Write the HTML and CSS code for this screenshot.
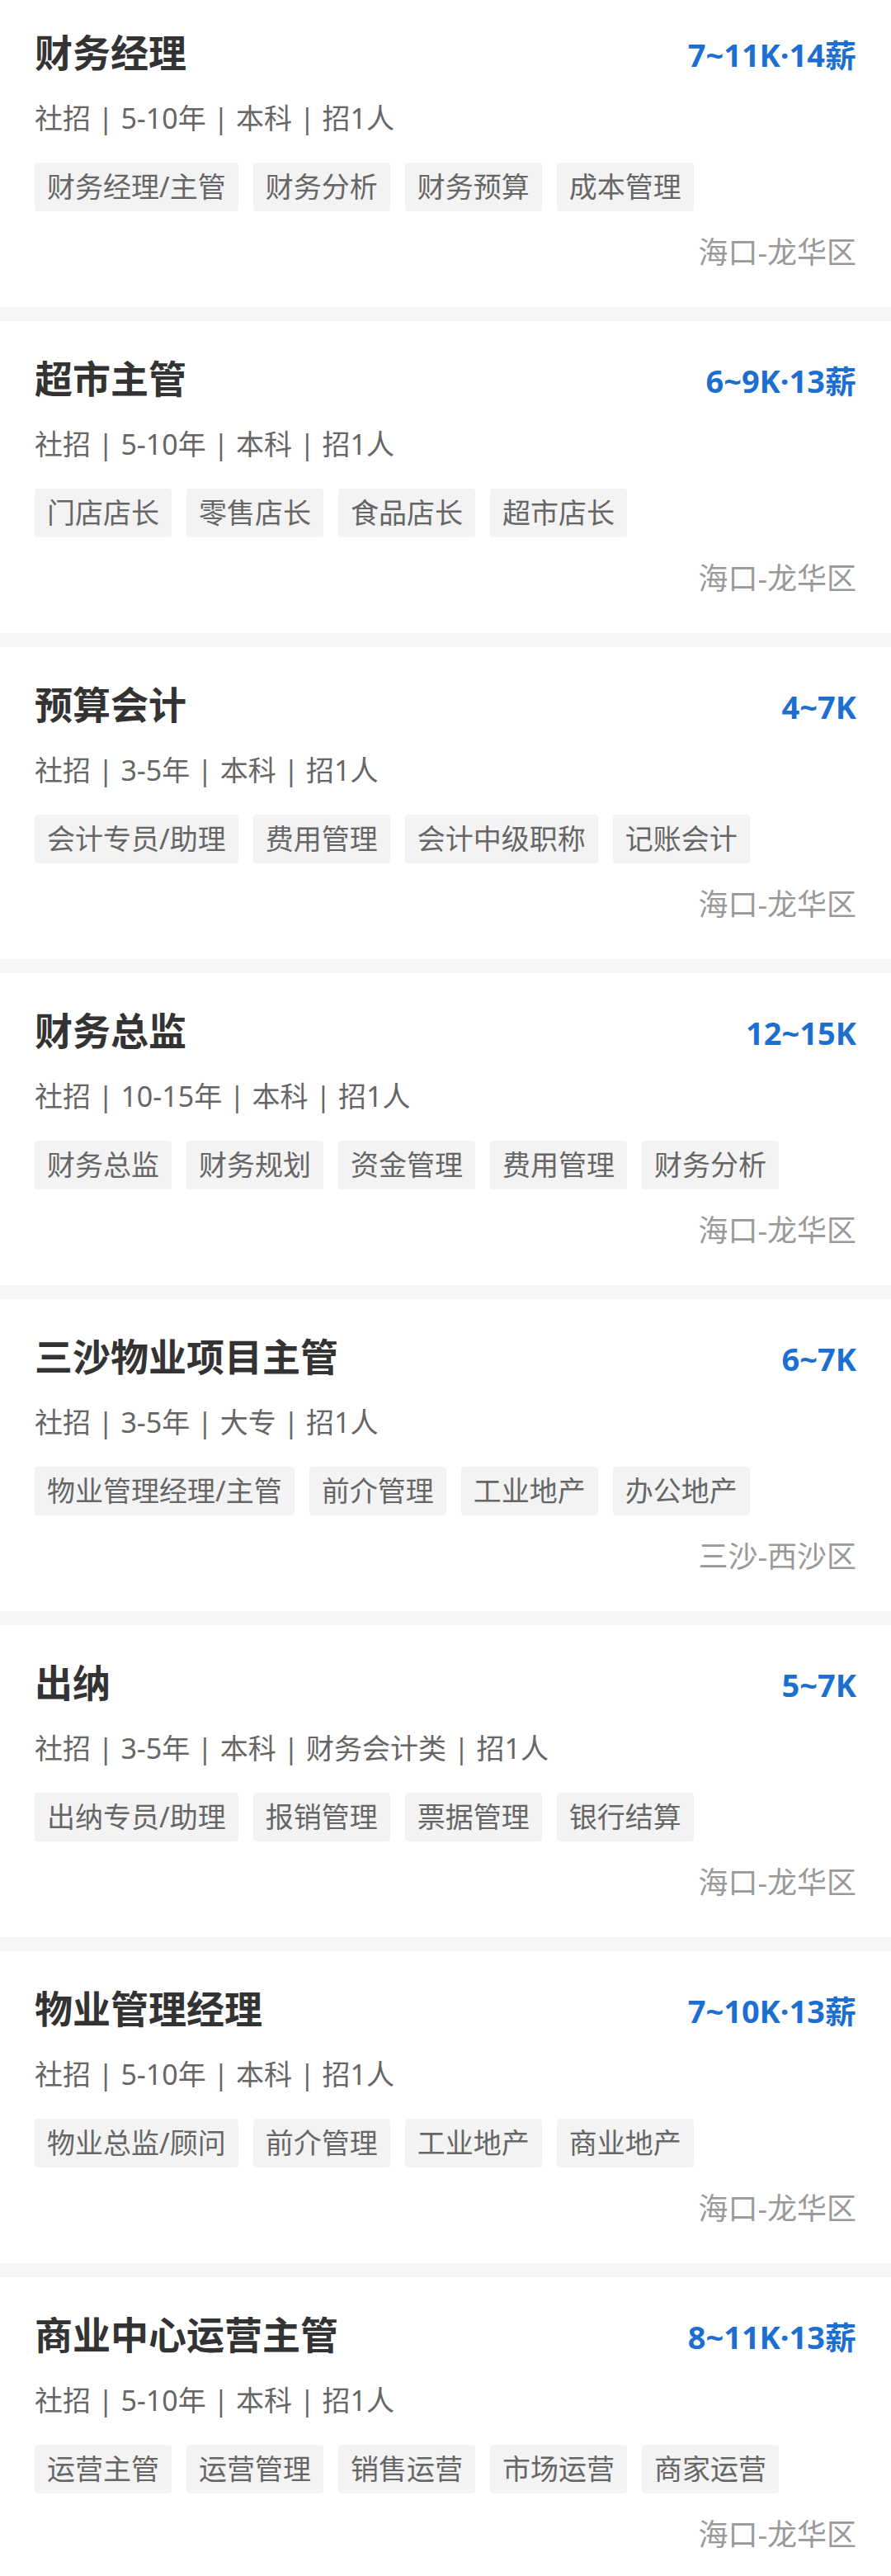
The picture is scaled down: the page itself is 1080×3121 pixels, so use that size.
FILE: index.html
```html
<!DOCTYPE html>
<html lang="zh-CN">
<head>
<meta charset="utf-8">
<title>职位列表</title>
<link rel="stylesheet" href="styles.css">
</head>
<body>
<main class="list">
  <section class="job">
    <div class="job-head"><h2 class="job-title">财务经理</h2><span class="job-salary">7~11K·14薪</span></div>
    <p class="job-meta">社招 | 5-10年 | 本科 | 招1人</p>
    <div class="job-tags"><span class="tag">财务经理/主管</span><span class="tag">财务分析</span><span class="tag">财务预算</span><span class="tag">成本管理</span></div>
    <p class="job-loc">海口-龙华区</p>
  </section>
  <section class="job">
    <div class="job-head"><h2 class="job-title">超市主管</h2><span class="job-salary">6~9K·13薪</span></div>
    <p class="job-meta">社招 | 5-10年 | 本科 | 招1人</p>
    <div class="job-tags"><span class="tag">门店店长</span><span class="tag">零售店长</span><span class="tag">食品店长</span><span class="tag">超市店长</span></div>
    <p class="job-loc">海口-龙华区</p>
  </section>
  <section class="job">
    <div class="job-head"><h2 class="job-title">预算会计</h2><span class="job-salary">4~7K</span></div>
    <p class="job-meta">社招 | 3-5年 | 本科 | 招1人</p>
    <div class="job-tags"><span class="tag">会计专员/助理</span><span class="tag">费用管理</span><span class="tag">会计中级职称</span><span class="tag">记账会计</span></div>
    <p class="job-loc">海口-龙华区</p>
  </section>
  <section class="job">
    <div class="job-head"><h2 class="job-title">财务总监</h2><span class="job-salary">12~15K</span></div>
    <p class="job-meta">社招 | 10-15年 | 本科 | 招1人</p>
    <div class="job-tags"><span class="tag">财务总监</span><span class="tag">财务规划</span><span class="tag">资金管理</span><span class="tag">费用管理</span><span class="tag">财务分析</span></div>
    <p class="job-loc">海口-龙华区</p>
  </section>
  <section class="job">
    <div class="job-head"><h2 class="job-title">三沙物业项目主管</h2><span class="job-salary">6~7K</span></div>
    <p class="job-meta">社招 | 3-5年 | 大专 | 招1人</p>
    <div class="job-tags"><span class="tag">物业管理经理/主管</span><span class="tag">前介管理</span><span class="tag">工业地产</span><span class="tag">办公地产</span></div>
    <p class="job-loc">三沙-西沙区</p>
  </section>
  <section class="job">
    <div class="job-head"><h2 class="job-title">出纳</h2><span class="job-salary">5~7K</span></div>
    <p class="job-meta">社招 | 3-5年 | 本科 | 财务会计类 | 招1人</p>
    <div class="job-tags"><span class="tag">出纳专员/助理</span><span class="tag">报销管理</span><span class="tag">票据管理</span><span class="tag">银行结算</span></div>
    <p class="job-loc">海口-龙华区</p>
  </section>
  <section class="job">
    <div class="job-head"><h2 class="job-title">物业管理经理</h2><span class="job-salary">7~10K·13薪</span></div>
    <p class="job-meta">社招 | 5-10年 | 本科 | 招1人</p>
    <div class="job-tags"><span class="tag">物业总监/顾问</span><span class="tag">前介管理</span><span class="tag">工业地产</span><span class="tag">商业地产</span></div>
    <p class="job-loc">海口-龙华区</p>
  </section>
  <section class="job">
    <div class="job-head"><h2 class="job-title">商业中心运营主管</h2><span class="job-salary">8~11K·13薪</span></div>
    <p class="job-meta">社招 | 5-10年 | 本科 | 招1人</p>
    <div class="job-tags"><span class="tag">运营主管</span><span class="tag">运营管理</span><span class="tag">销售运营</span><span class="tag">市场运营</span><span class="tag">商家运营</span></div>
    <p class="job-loc">海口-龙华区</p>
  </section>
</main>
</body>
</html>
```

FILE: styles.css
```css
html, body {
  margin: 0;
  padding: 0;
}
body {
  background: #f5f5f7;
  font-family: "Noto Sans", "Noto Sans CJK SC", sans-serif;
  overflow: hidden;
}
.list {
  display: flex;
  flex-direction: column;
  gap: 17px;
  margin-top: -6px;
}
.job {
  background: #ffffff;
  height: 378px;
  box-sizing: border-box;
  padding: 39px 42px 0 42px;
  display: flex;
  flex-direction: column;
}
.job-head {
  display: flex;
  justify-content: space-between;
  align-items: center;
  height: 60px;
}
.job-title {
  margin: 0;
  font-size: 46px;
  line-height: 60px;
  font-weight: 700;
  color: #333333;
}
.job-salary {
  font-size: 38px;
  line-height: 60px;
  font-weight: 700;
  color: #1c6fd1;
  position: relative;
  top: 3px;
}
.job-meta {
  margin: 26px 0 0 0;
  font-size: 34px;
  line-height: 48px;
  color: #666666;
}
.job-tags {
  display: flex;
  flex-wrap: nowrap;
  gap: 18px;
  margin-top: 30px;
}
.tag {
  display: block;
  height: 59px;
  line-height: 59px;
  padding: 0 15px;
  font-size: 34px;
  color: #666666;
  background: #f3f3f3;
  border-radius: 4px;
  white-space: nowrap;
}
.job-loc {
  margin: 26px 0 0 0;
  font-size: 36px;
  line-height: 48px;
  color: #999999;
  text-align: right;
}
```
